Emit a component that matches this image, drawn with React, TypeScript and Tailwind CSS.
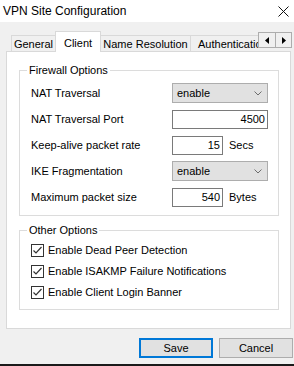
import React from 'react';

const FIREWALL_ROWS = [
  { label: 'NAT Traversal', kind: 'select', value: 'enable' },
  { label: 'NAT Traversal Port', kind: 'input', value: '4500', wide: true },
  { label: 'Keep-alive packet rate', kind: 'input', value: '15', unit: 'Secs' },
  { label: 'IKE Fragmentation', kind: 'select', value: 'enable' },
  { label: 'Maximum packet size', kind: 'input', value: '540', unit: 'Bytes' },
];

const OTHER_OPTIONS = [
  'Enable Dead Peer Detection',
  'Enable ISAKMP Failure Notifications',
  'Enable Client Login Banner',
];

function Chevron() {
  return (
    <svg width="8" height="5" viewBox="0 0 8 5">
      <path d="M0.5 0.5L4 4L7.5 0.5" fill="none" stroke="#6d6d6d" strokeWidth="1" />
    </svg>
  );
}

function Check() {
  return (
    <svg width="11" height="11" viewBox="0 0 11 11">
      <path d="M1.5 5.5L4 8L9.5 2" fill="none" stroke="#333" strokeWidth="1.2" />
    </svg>
  );
}

function GroupBox({ title, className, children }: { title: string; className: string; children: React.ReactNode }) {
  return (
    <div className={`relative w-[260px] border border-[#dcdcdc] ${className}`}>
      <span className="absolute -top-[8px] left-[7px] bg-white px-[2px] leading-[14px]">{title}</span>
      {children}
    </div>
  );
}

export default function App() {
  return (
    <div className="flex h-[366px] w-[294px] flex-col overflow-hidden bg-[#f0f0f0] font-['Liberation_Sans',Arial,sans-serif] text-[11px] text-black">
      <div className="flex h-[22px] shrink-0 items-center justify-between bg-white pl-[3px] pr-[5px]">
        <span className="text-[12px] leading-[14px]">VPN Site Configuration</span>
        <svg width="11" height="11" viewBox="0 0 11 11" className="mt-[1px]">
          <path d="M0.5 0.5L10.5 10.5M10.5 0.5L0.5 10.5" stroke="#111" strokeWidth="1" />
        </svg>
      </div>

      <div className="relative z-10 -mb-px mt-[9px] flex h-[21px] shrink-0 items-end pl-[11px]">
        <div className="flex w-[247px] items-end overflow-hidden">
          <div className="flex h-[17px] w-[44px] shrink-0 items-center justify-center border-l border-t border-[#d9d9d9]">
            General
          </div>
          <div className="flex h-[21px] w-[46px] shrink-0 items-start justify-center border-x border-t border-[#d9d9d9] bg-white pt-[3px]">
            Client
          </div>
          <div className="flex h-[17px] w-[90px] shrink-0 items-center justify-center border-r border-t border-[#d9d9d9]">
            Name Resolution
          </div>
          <div className="flex h-[17px] w-[80px] shrink-0 items-center whitespace-nowrap border-t border-[#d9d9d9] pl-[7px]">
            Authentication
          </div>
        </div>
        <div className="mb-[4px] flex self-end">
          <div className="flex h-[16px] w-[18px] items-center justify-center border border-[#adadad] bg-[#f0f0f0]">
            <svg width="4" height="7" viewBox="0 0 4 7"><path d="M4 0L0 3.5L4 7Z" fill="#000" /></svg>
          </div>
          <div className="flex h-[16px] w-[16px] items-center justify-center border border-l-0 border-[#adadad] bg-[#f0f0f0]">
            <svg width="4" height="7" viewBox="0 0 4 7"><path d="M0 0L4 3.5L0 7Z" fill="#000" /></svg>
          </div>
        </div>
      </div>

      <div className="ml-[6px] flex h-[278px] w-[285px] shrink-0 flex-col border border-[#d9d9d9] bg-white pl-[12px] pt-[18px]">
        <GroupBox title="Firewall Options" className="h-[146px] pl-[11px] pt-[12px]">
          <div className="flex flex-col gap-[6px]">
            {FIREWALL_ROWS.map((row) => (
              <div key={row.label} className="flex h-[20px] items-center">
                <span className="w-[141px]">{row.label}</span>
                {row.kind === 'select' ? (
                  <div className="flex h-[20px] w-[96px] items-center justify-between border border-[#adadad] bg-[#e1e1e1] pl-[4px] pr-[5px]">
                    <span>{row.value}</span>
                    <Chevron />
                  </div>
                ) : (
                  <>
                    <div
                      className={`flex h-[19px] items-center justify-end border border-[#7a7a7a] bg-white pr-[2px] ${row.wide ? 'w-[96px]' : 'w-[51px]'}`}
                    >
                      {row.value}
                    </div>
                    {row.unit && <span className="ml-[6px]">{row.unit}</span>}
                  </>
                )}
              </div>
            ))}
          </div>
        </GroupBox>

        <GroupBox title="Other Options" className="mt-[14px] h-[80px] pl-[11px] pt-[13px]">
          <div className="flex flex-col gap-[8px]">
            {OTHER_OPTIONS.map((opt) => (
              <div key={opt} className="flex h-[13px] items-center gap-[4px]">
                <span className="flex h-[13px] w-[13px] items-center justify-center border border-[#333] bg-white">
                  <Check />
                </span>
                <span>{opt}</span>
              </div>
            ))}
          </div>
        </GroupBox>
      </div>

      <div className="mt-[9px] flex justify-end gap-[6px] pr-[1px]">
        <button className="flex h-[20px] w-[74px] items-center justify-center border-2 border-[#0078d7] bg-[#e1e1e1]">
          Save
        </button>
        <button className="flex h-[20px] w-[74px] items-center justify-center border border-[#adadad] bg-[#e1e1e1]">
          Cancel
        </button>
      </div>

      <div className="mt-auto h-[2px] bg-[#1a1a1a]" />
    </div>
  );
}
